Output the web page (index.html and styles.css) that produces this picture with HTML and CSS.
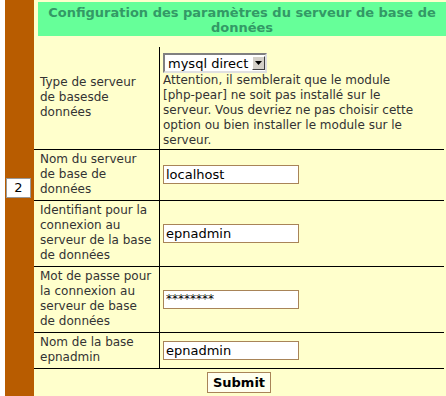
FILE: index.html
```html
<!DOCTYPE html>
<html lang="fr">
<head>
    <meta charset="UTF-8">
    <title>Installation - Base de données</title>
    <link rel="stylesheet" href="styles.css">
</head>
<body>
    <div class="layout">
        <div class="step">
            <span class="step-num">2</span>
        </div>

        <div class="panel">
            <h2 class="panel-title">Configuration des paramètres du serveur de base de données</h2>

            <form class="config-form">
                <table class="config">
                    <tr class="first">
                        <td class="label">Type de serveur de basesde données</td>
                        <td class="value">
                            <span class="select-wrap">
                                <select name="dbtype">
                                    <option>mysql direct</option>
                                </select>
                                <span class="select-arrow">
                                    <svg width="7" height="4" viewBox="0 0 7 4"><path d="M0 0h7L3.5 4z" fill="#000"/></svg>
                                </span>
                            </span>
                            <p class="warning">Attention, il semblerait que le module [php-pear] ne soit pas installé sur le serveur. Vous devriez ne pas choisir cette option ou bien installer le module sur le serveur.</p>
                        </td>
                    </tr>
                    <tr>
                        <td class="label">Nom du serveur de base de données</td>
                        <td class="value"><input type="text" name="host" value="localhost"></td>
                    </tr>
                    <tr>
                        <td class="label">Identifiant pour la connexion au serveur de la base de données</td>
                        <td class="value"><input type="text" name="user" value="epnadmin"></td>
                    </tr>
                    <tr>
                        <td class="label">Mot de passe pour la connexion au serveur de base de données</td>
                        <td class="value"><input type="text" class="pass" name="pass" value="********"></td>
                    </tr>
                    <tr>
                        <td class="label">Nom de la base epnadmin</td>
                        <td class="value"><input type="text" name="base" value="epnadmin"></td>
                    </tr>
                    <tr>
                        <td class="actions" colspan="2"><button type="submit">Submit</button></td>
                    </tr>
                </table>
            </form>
        </div>
    </div>
</body>
</html>
```

FILE: styles.css
```css
* {
    margin: 0;
    padding: 0;
    box-sizing: border-box;
}

body {
    font-family: "DejaVu Sans", Verdana, sans-serif;
    font-size: 12px;
    background: #ffffff;
    color: #333333;
}

.layout {
    display: flex;
    min-height: 396px;
    padding-left: 5px;
}

/* left step column */
.step {
    width: 29px;
    background: #b85c00;
    display: flex;
    align-items: center;
    padding: 0 0 20px 1px;
}

.step-num {
    display: block;
    width: 25px;
    height: 20px;
    line-height: 18px;
    background: #ffffff;
    border: 1px solid #999999;
    color: #000000;
    font-size: 13px;
    text-align: center;
}

.panel {
    flex: 1;
    background: #ffffcc;
}

.panel-title {
    margin: 2px 0 0 4px;
    padding: 3px 0 1px;
    background: #66ff99;
    color: #339966;
    font-size: 13px;
    line-height: 15px;
    font-weight: bold;
    text-align: center;
}

.config {
    width: 410px;
    margin-top: 11px;
    border-collapse: separate;
    border-spacing: 0;
}

.config td {
    line-height: 15px;
    padding: 2px 0 3px;
    vertical-align: middle;
    border-bottom: 1px solid #000000;
}

.config td.label {
    width: 126px;
    padding-left: 6px;
    padding-right: 6px;
    border-right: 1px solid #000000;
}

.config td.value {
    padding-left: 3px;
}

.config tr.first td.value {
    padding-top: 1px;
    padding-bottom: 1px;
}

.select-wrap {
    position: relative;
    display: inline-block;
    margin-top: 5px;
    vertical-align: top;
}

select {
    -webkit-appearance: none;
    appearance: none;
    display: block;
    width: 104px;
    height: 20px;
    padding: 0 0 0 3px;
    font-family: inherit;
    font-size: 13px;
    color: #000000;
    background: #ffffff;
    border: 2px solid;
    border-color: #808080 #e0e0e0 #e0e0e0 #808080;
    border-radius: 0;
}

.select-arrow {
    position: absolute;
    right: 2px;
    top: 3px;
    width: 13px;
    height: 14px;
    display: flex;
    align-items: center;
    justify-content: center;
    background: #d4d0c8;
    border: 1px solid;
    border-color: #ffffff #404040 #404040 #ffffff;
}

.warning {
    max-width: 257px;
    line-height: 15px;
}

input[type="text"] {
    width: 136px;
    height: 19px;
    padding: 0 2px;
    font-family: inherit;
    font-size: 13px;
    color: #000000;
    background: #ffffff;
    border: 1px solid #a88458;
    border-radius: 0;
    vertical-align: middle;
}

input.pass {
    font-size: 12px;
}

.config td.actions {
    border-bottom: none;
    text-align: center;
    padding-top: 3px;
}

.actions button {
    height: 21px;
    padding: 0 5px;
    font-family: inherit;
    font-size: 13px;
    font-weight: bold;
    color: #000000;
    background: #ffffee;
    border: 1px solid #a88458;
    border-radius: 0;
}
```
